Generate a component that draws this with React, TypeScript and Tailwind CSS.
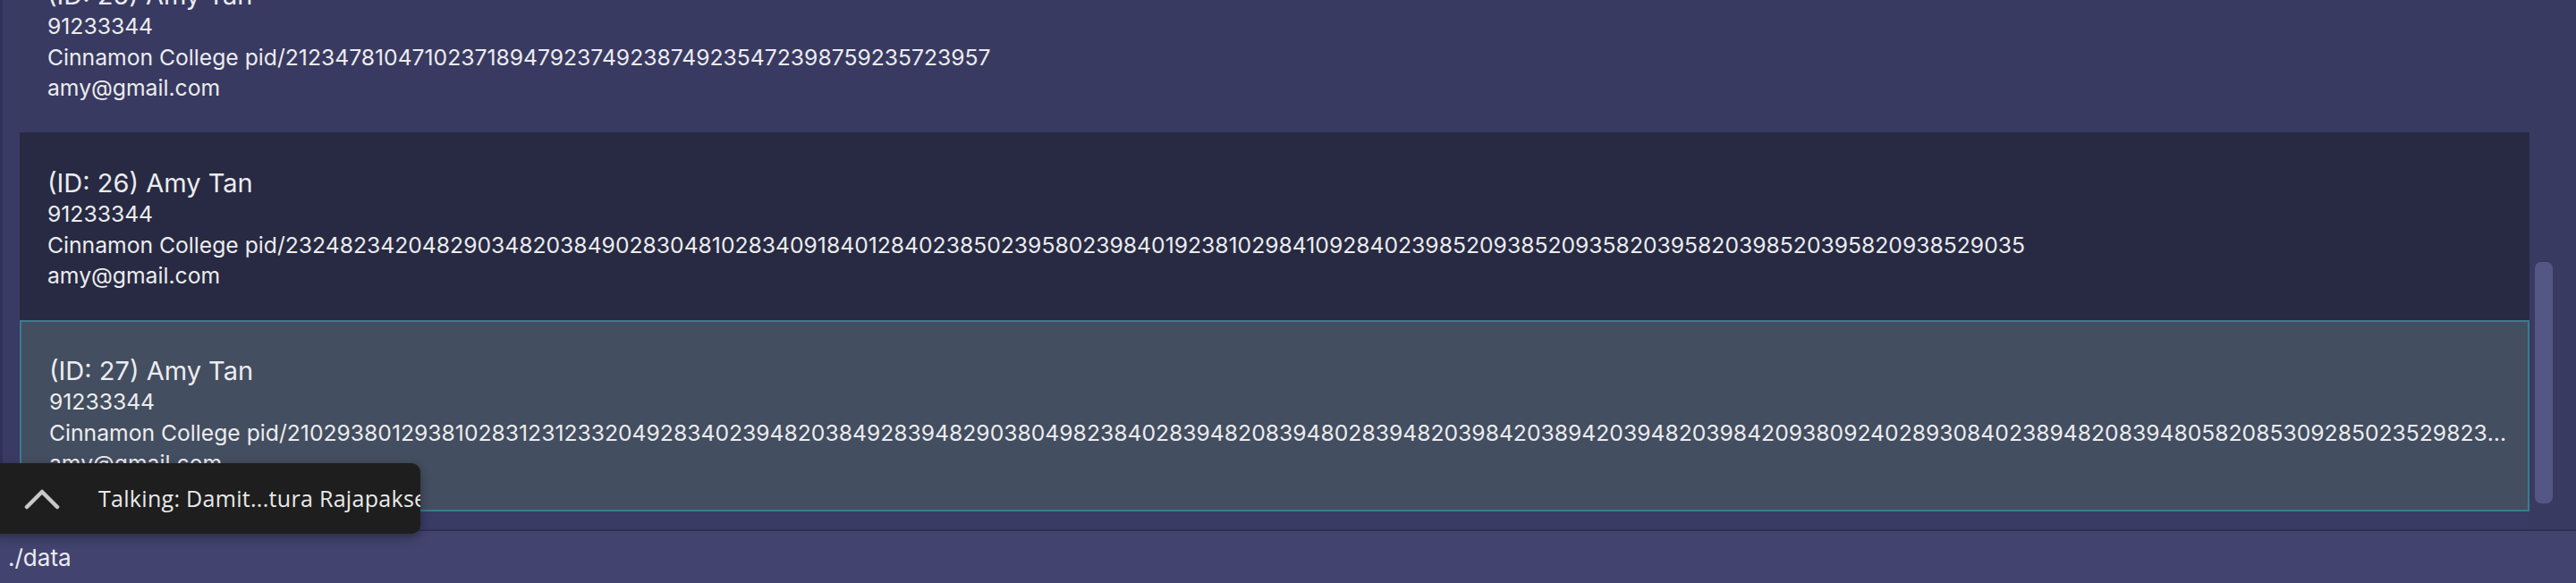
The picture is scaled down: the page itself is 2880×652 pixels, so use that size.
import React from 'react';

type Person = {
  id: number;
  name: string;
  phone: string;
  pid: string;
  email: string;
};

const PEOPLE: Person[] = [
  {
    id: 25,
    name: 'Amy Tan',
    phone: '91233344',
    pid: '212347810471023718947923749238749235472398759235723957',
    email: 'amy@gmail.com',
  },
  {
    id: 26,
    name: 'Amy Tan',
    phone: '91233344',
    pid: '232482342048290348203849028304810283409184012840238502395802398401923810298410928402398520938520935820395820398520395820938529035',
    email: 'amy@gmail.com',
  },
  {
    id: 27,
    name: 'Amy Tan',
    phone: '91233344',
    pid: '21029380129381028312312332049283402394820384928394829038049823840283948208394802839482039842038942039482039842093809240289308402389482083948058208530928502352982309482039485',
    email: 'amy@gmail.com',
  },
];

function PersonCard({ person, variant }: { person: Person; variant: 'plain' | 'dark' | 'selected' }) {
  const shell =
    variant === 'selected'
      ? 'h-[214px] border-2 border-[#3b7c8e] bg-[#434e60] pl-[31px] pt-[38px]'
      : variant === 'dark'
        ? 'h-[210px] bg-[#272a42] pl-[31px] pt-[40px]'
        : 'h-[210px] bg-[#393a61] pl-[31px] pt-[40px]';

  return (
    <div className={`${shell} pr-[11px] text-[#ececef]`}>
      <div className="text-[29px] leading-[34px]">
        (ID: {person.id}) {person.name}
      </div>
      <div className="text-[24.7px] leading-[34.5px]">{person.phone}</div>
      <div className="overflow-hidden text-ellipsis whitespace-nowrap text-[24.7px] leading-[34.5px]">
        Cinnamon College pid/{person.pid}
      </div>
      <div className="text-[24.7px] leading-[34.5px]">{person.email}</div>
    </div>
  );
}

export default function App() {
  return (
    <div
      className="relative flex h-[652px] w-[2880px] flex-col overflow-hidden bg-[#3a3b64]"
      style={{ fontFamily: 'Inter, "Liberation Sans", sans-serif' }}
    >
      {/* person list */}
      <div className="flex h-[592px] overflow-hidden border-l-[3px] border-[#30315a] bg-[#3a3b64]">
        <div className="ml-[19px] mt-[-62px] flex w-[2806px] flex-col">
          <PersonCard person={PEOPLE[0]} variant="plain" />
          <PersonCard person={PEOPLE[1]} variant="dark" />
          <PersonCard person={PEOPLE[2]} variant="selected" />
        </div>
        <div className="flex-1 bg-[#393a62] pl-[6px] pt-[293px]">
          <div className="h-[270px] w-[20px] rounded-[7px] bg-[#545783]" />
        </div>
      </div>

      <div className="h-[2px] bg-[#2f3053]" />

      {/* status bar */}
      <div className="flex h-[58px] items-center bg-[#42446f] pl-[9px] text-[26px] text-[#ececef]">./data</div>

      {/* speaker toast */}
      <div className="absolute left-[-12px] top-[518px] flex h-[79px] w-[482px] items-center overflow-hidden rounded-[10px] bg-[#1e1e1e] shadow-[0_4px_12px_rgba(0,0,0,0.35)]">
        <svg className="ml-[39px] shrink-0" width="40" height="24" viewBox="0 0 40 24" fill="none">
          <polyline points="3,21 20,4 37,21" stroke="#c9c9c9" strokeWidth="4.5" strokeLinecap="round" strokeLinejoin="round" />
        </svg>
        <span
          className="ml-[43px] whitespace-nowrap text-[25px] tracking-[0.3px] text-[#e9e9e9]"
          style={{ fontFamily: '"Open Sans", "Noto Sans", sans-serif' }}
        >
          Talking: Damit...tura Rajapakse
        </span>
      </div>
    </div>
  );
}
